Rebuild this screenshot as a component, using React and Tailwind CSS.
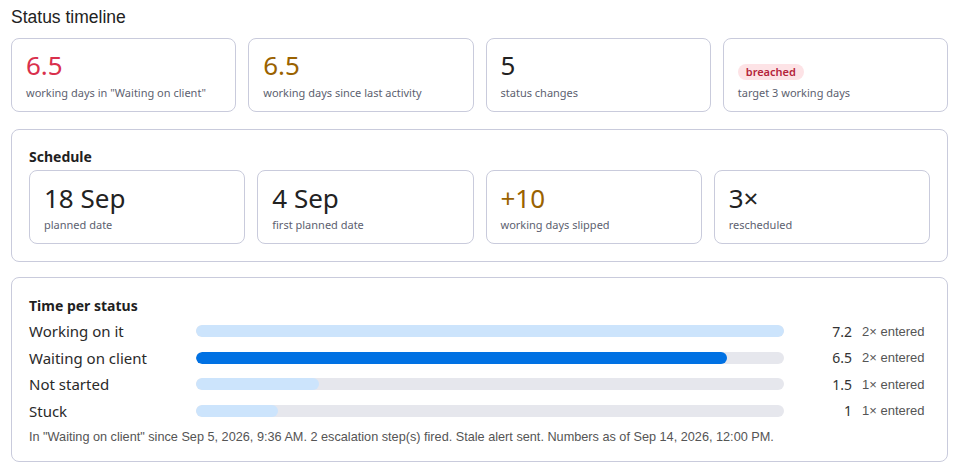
import React from "react";

const seg = { fontFamily: '"Noto Sans", "Open Sans", sans-serif' };
const arial = { fontFamily: '"Liberation Sans", Arial, sans-serif' };

function Stat({ value, label, color, badge }) {
  return (
    <div className="flex h-[74px] flex-col justify-center rounded-lg border border-[#c9cbdc] bg-white px-[14px]">
      {badge ? (
        <div className="flex h-[32px] items-end pb-[1px]">
          <span className="rounded-full bg-[#fde3e6] px-[8px] text-[11px] font-semibold leading-[16px] text-[#b4233b]">
            {badge}
          </span>
        </div>
      ) : (
        <div className={`h-[32px] text-[26px] leading-[32px] ${color}`}>{value}</div>
      )}
      <div className="mt-[4px] text-[11px] leading-[16px] text-[#5d5f70]">{label}</div>
    </div>
  );
}

function Big({ value, label, color }) {
  return (
    <div className="flex h-[74px] flex-col justify-center rounded-lg border border-[#c9cbdc] bg-white px-[14px]">
      <div className={`text-[26px] leading-[34px] ${color}`}>{value}</div>
      <div className="mt-[2px] text-[11px] leading-[16px] text-[#5d5f70]">{label}</div>
    </div>
  );
}

const rows = [
  { name: "Working on it", v: 7.2, times: "2×", dark: false },
  { name: "Waiting on client", v: 6.5, times: "2×", dark: true },
  { name: "Not started", v: 1.5, times: "1×", dark: false },
  { name: "Stuck", v: 1, times: "1×", dark: false },
];

export default function App() {
  return (
    <div className="w-[960px] bg-white px-[11px] pt-[5px] text-[#222]" style={seg}>
      <div className="h-[24px] text-[17.5px] leading-[24px] text-[#222]" style={arial}>
        Status timeline
      </div>
      <div className="mt-[9px] grid w-[937px] grid-cols-4 gap-[12px]">
        <Stat value="6.5" color="text-[#d9304c]" label={'working days in "Waiting on client"'} />
        <Stat value="6.5" color="text-[#9a6200]" label="working days since last activity" />
        <Stat value="5" color="text-[#222]" label="status changes" />
        <Stat badge="breached" label="target 3 working days" />
      </div>

      <div className="mt-[17px] w-[937px] rounded-lg border border-[#c9cbdc] px-[17px] pb-[17px] pt-[16px]">
        <div className="text-[14px] font-bold leading-[22px] text-[#1f1f1f]">Schedule</div>
        <div className="mt-[2px] grid grid-cols-4 gap-[12px]">
          <Big value="18 Sep" color="text-[#222]" label="planned date" />
          <Big value="4 Sep" color="text-[#222]" label="first planned date" />
          <Big value="+10" color="text-[#9a6200]" label="working days slipped" />
          <Big value="3×" color="text-[#222]" label="rescheduled" />
        </div>
      </div>

      <div className="mt-[15px] w-[937px] rounded-lg border border-[#c9cbdc] px-[17px] pb-[15px] pt-[17px]">
        <div className="text-[14px] font-bold leading-[22px] text-[#1f1f1f]">Time per status</div>
        <div className="mt-[1px] flex flex-col">
          {rows.map((r) => (
            <div key={r.name} className="flex h-[26.5px] items-center">
              <div className="w-[167px] text-[15px] text-[#2a2a2a]">{r.name}</div>
              <div className="h-[12px] w-[588px] overflow-hidden rounded-full bg-[#e6e7ed]">
                <div
                  className={`h-full rounded-full ${r.dark ? "bg-[#0071e3]" : "bg-[#cce4fc]"}`}
                  style={{ width: `${(r.v / 7.2) * 100}%` }}
                />
              </div>
              <div className="w-[68px] text-right text-[14px] text-[#333]">{r.v}</div>
              <div className="ml-[10px] text-[13px] text-[#555]" style={arial}>
                {r.times} entered
              </div>
            </div>
          ))}
        </div>
        <div className="mt-[4px] text-[12.7px] leading-[18px] text-[#555]" style={arial}>
          In "Waiting on client" since Sep 5, 2026, 9:36 AM. 2 escalation step(s) fired. Stale alert sent. Numbers as of Sep 14, 2026, 12:00 PM.
        </div>
      </div>
    </div>
  );
}
